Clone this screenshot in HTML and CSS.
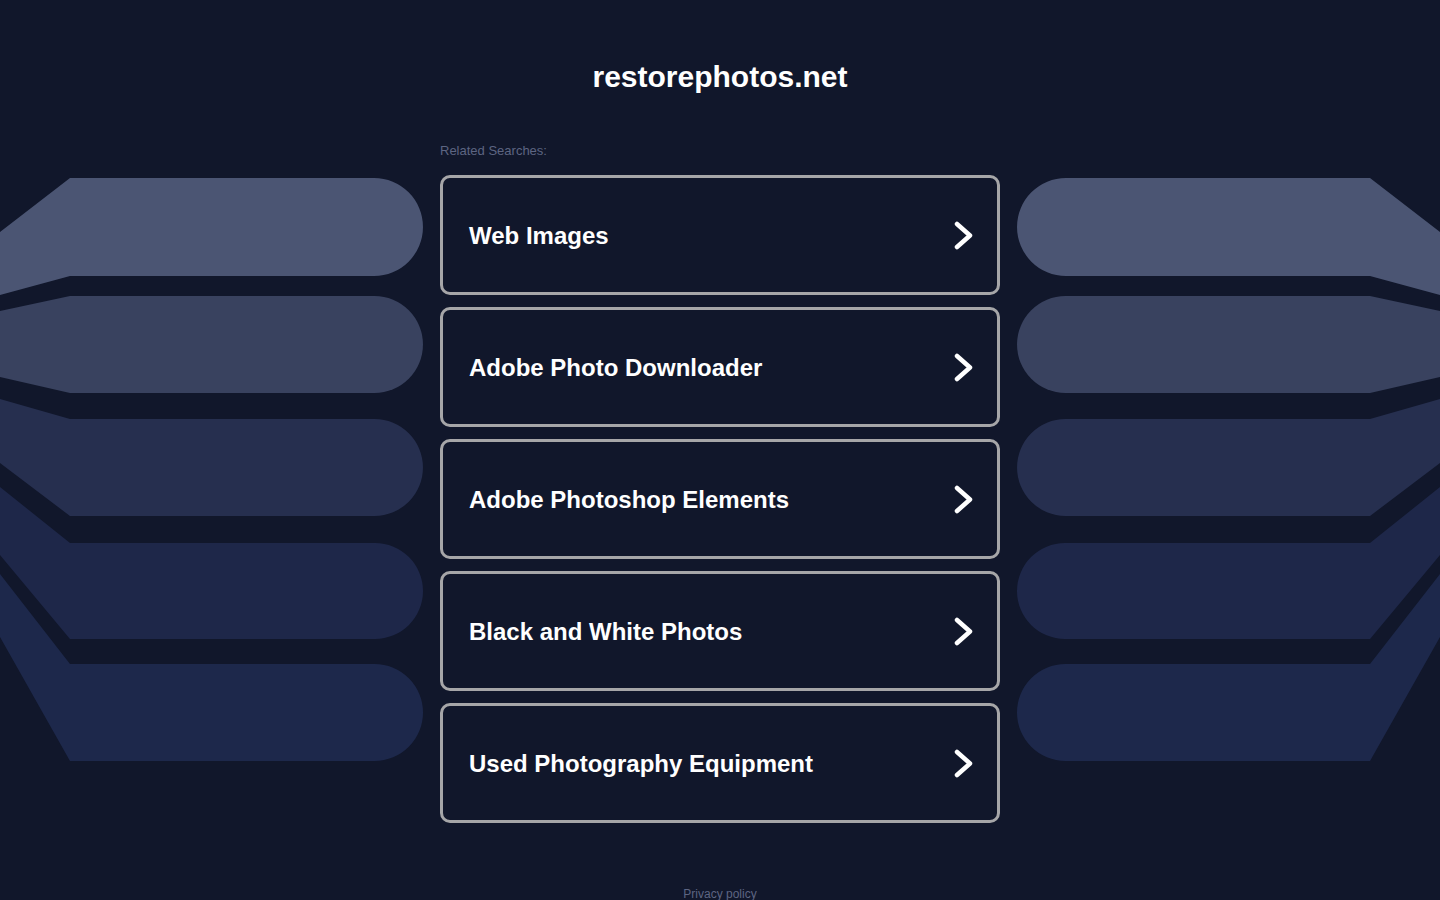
FILE: index.html
```html
<!DOCTYPE html>
<html lang="en">
<head>
<meta charset="utf-8">
<title>restorephotos.net</title>
<link rel="stylesheet" href="styles.css">
</head>
<body>
<header class="header">
  <h1 class="domain">restorephotos.net</h1>
</header>
<main class="layout">
  <svg class="fan fan-left" width="423" height="640" viewBox="0 142 423 640" aria-hidden="true">
    <path class="s1" d="M0,232 L70,178 L374,178 A49,49 0 0 1 374,276 L70,276 L0,295 Z"/>
    <path class="s2" d="M0,311 L70,296 L374.5,296 A48.5,48.5 0 0 1 374.5,393 L70,393 L0,377 Z"/>
    <path class="s3" d="M0,399 L70,419 L374.5,419 A48.5,48.5 0 0 1 374.5,516 L70,516 L0,463 Z"/>
    <path class="s4" d="M0,487 L70,543 L375,543 A48,48 0 0 1 375,639 L70,639 L0,555 Z"/>
    <path class="s5" d="M0,574 L70,664 L374.5,664 A48.5,48.5 0 0 1 374.5,761 L70,761 L0,637 Z"/>
  </svg>
  <section class="center">
    <p class="label">Related Searches:</p>
    <ul class="list">
      <li><a class="card" href="#"><span class="card-text">Web Images</span><svg class="chev" width="24" height="30" viewBox="0 0 24 30"><path d="M7,4 L20,15.5 L7,27"/></svg></a></li>
      <li><a class="card" href="#"><span class="card-text">Adobe Photo Downloader</span><svg class="chev" width="24" height="30" viewBox="0 0 24 30"><path d="M7,4 L20,15.5 L7,27"/></svg></a></li>
      <li><a class="card" href="#"><span class="card-text">Adobe Photoshop Elements</span><svg class="chev" width="24" height="30" viewBox="0 0 24 30"><path d="M7,4 L20,15.5 L7,27"/></svg></a></li>
      <li><a class="card" href="#"><span class="card-text">Black and White Photos</span><svg class="chev" width="24" height="30" viewBox="0 0 24 30"><path d="M7,4 L20,15.5 L7,27"/></svg></a></li>
      <li><a class="card" href="#"><span class="card-text">Used Photography Equipment</span><svg class="chev" width="24" height="30" viewBox="0 0 24 30"><path d="M7,4 L20,15.5 L7,27"/></svg></a></li>
    </ul>
  </section>
  <svg class="fan fan-right" width="423" height="640" viewBox="0 142 423 640" aria-hidden="true">
    <path class="s1" d="M0,232 L70,178 L374,178 A49,49 0 0 1 374,276 L70,276 L0,295 Z"/>
    <path class="s2" d="M0,311 L70,296 L374.5,296 A48.5,48.5 0 0 1 374.5,393 L70,393 L0,377 Z"/>
    <path class="s3" d="M0,399 L70,419 L374.5,419 A48.5,48.5 0 0 1 374.5,516 L70,516 L0,463 Z"/>
    <path class="s4" d="M0,487 L70,543 L375,543 A48,48 0 0 1 375,639 L70,639 L0,555 Z"/>
    <path class="s5" d="M0,574 L70,664 L374.5,664 A48.5,48.5 0 0 1 374.5,761 L70,761 L0,637 Z"/>
  </svg>
</main>
<footer class="footer">
  <a class="privacy" href="#">Privacy policy</a>
</footer>
</body>
</html>
```

FILE: styles.css
```css
html, body {
  margin: 0;
  padding: 0;
}

body {
  background: #11172b;
  font-family: "Liberation Sans", Arial, Helvetica, sans-serif;
  color: #ffffff;
  width: 1440px;
  height: 900px;
  overflow: hidden;
}

.header {
  padding-top: 59px;
  text-align: center;
}

.domain {
  margin: 0;
  font-size: 30px;
  line-height: 36px;
  font-weight: bold;
  color: #ffffff;
}

.layout {
  margin-top: 48px;
  display: grid;
  grid-template-columns: 423px 560px 423px;
  column-gap: 17px;
  align-items: start;
}

.fan {
  display: block;
  margin-top: -1px;
}

.fan-right {
  transform: scaleX(-1);
}

.s1 { fill: #4b5573; }
.s2 { fill: #39425f; }
.s3 { fill: #262f4f; }
.s4 { fill: #1e2749; }
.s5 { fill: #1d284b; }

.center {
  display: flex;
  flex-direction: column;
}

.label {
  margin: 0;
  font-size: 13px;
  line-height: 16px;
  color: #5d6582;
}

.list {
  list-style: none;
  margin: 16px 0 0;
  padding: 0;
  display: flex;
  flex-direction: column;
  gap: 12px;
}

.card {
  box-sizing: border-box;
  height: 120px;
  border: 3px solid #a6a6a8;
  border-radius: 10px;
  display: flex;
  align-items: center;
  justify-content: space-between;
  padding: 0 23px 0 26px;
  text-decoration: none;
  color: #ffffff;
}

.card-text {
  font-size: 24px;
  font-weight: bold;
  line-height: 28px;
  margin-top: 2px;
}

.chev {
  display: block;
  margin-top: -1px;
}

.chev path {
  fill: none;
  stroke: #ffffff;
  stroke-width: 4.5;
  stroke-linecap: round;
  stroke-linejoin: round;
}

.footer {
  margin-top: 61px;
  text-align: center;
}

.privacy {
  font-size: 12px;
  line-height: 14px;
  color: #5d6582;
  text-decoration: none;
}
```
